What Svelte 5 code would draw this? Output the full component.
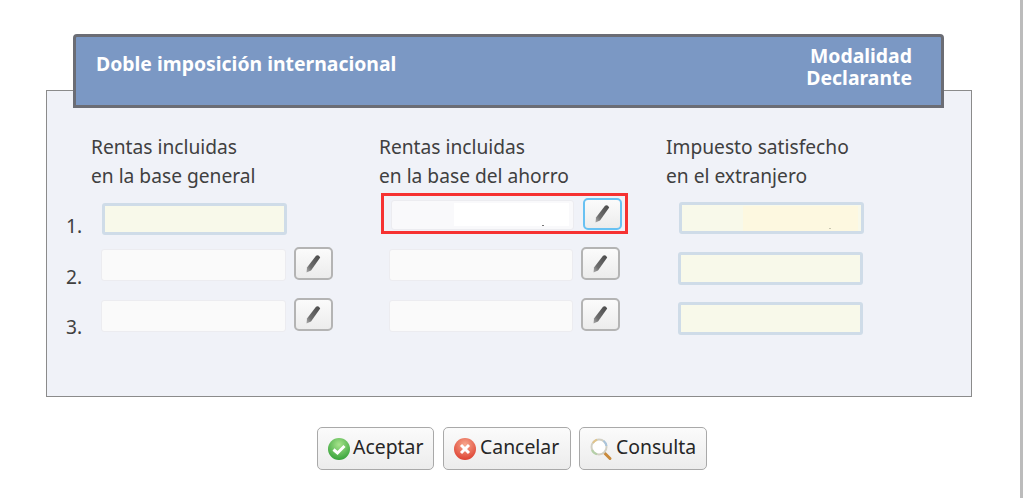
<script>
  const heads = [
    ["Rentas incluidas", "en la base general"],
    ["Rentas incluidas", "en la base del ahorro"],
    ["Impuesto satisfecho", "en el extranjero"]
  ];
  const rows = [2, 3];
</script>

<style>
  :global(body) {
    margin: 0;
    background: #fff;
  }

  .page {
    position: relative;
    box-sizing: border-box;
    width: 1023px;
    height: 498px;
    padding: 34px 0 0 46px;
    border-right: 3px solid #bcbcbc;
    overflow: hidden;
    font-family: "Noto Sans", sans-serif;
    color: #404040;
  }

  .thumb {
    position: absolute;
    top: 25px;
    right: -3px;
    width: 2px;
    height: 55px;
    background: #8f97ad;
  }

  .defs {
    position: absolute;
  }

  .head {
    position: relative;
    z-index: 1;
    box-sizing: border-box;
    display: flex;
    justify-content: space-between;
    width: 871px;
    height: 74px;
    margin: 0 0 -18px 27px;
    padding: 8px 29px 0 20px;
    color: #fff;
    font-weight: 700;
    font-size: 19.4px;
    background: #7b98c4;
    border: 3px solid #6b6d75;
    border-radius: 4px 4px 0 0;
  }

  .head h1 {
    margin: 0;
    padding-top: 6px;
    font: inherit;
    line-height: 25px;
  }

  .mode {
    text-align: right;
    line-height: 22px;
  }

  .panel {
    box-sizing: border-box;
    width: 926px;
    height: 307px;
    padding: 41px 0 0 19px;
    background: #f0f2f8;
    border: 1px solid #8b8b8b;
  }

  .form {
    display: grid;
    grid-template-columns: 25px 288px 287px 300px;
    grid-template-rows: 59px 56px 51px 51px;
    font-size: 19.2px;
  }

  .label {
    line-height: 29px;
  }

  .num {
    line-height: 29px;
  }

  .n1 { margin-top: 20px; }
  .n2 { margin-top: 15px; }
  .n3 { margin-top: 14px; }

  .field {
    box-sizing: border-box;
    width: 185px;
    height: 32px;
    border-radius: 3px;
  }

  .plain {
    margin-top: 2px;
    background: #fafafa;
    border: 1px solid #ececf0;
  }

  .filled {
    background: #f8f9ea;
    border: 3px solid #cfdce8;
  }

  .line {
    display: flex;
    align-items: flex-start;
    gap: 8px;
  }

  .c1 { margin-left: 10px; }
  .c2 { margin-left: 10px; }
  .c2 .field { width: 184px; }
  .c3 { margin: 4px 0 0 12px; height: 33px; }
  .c3.r2 { margin-top: 5px; }

  .first1 { margin: 12px 0 0 11px; }
  .first3 { position: relative; margin: 11px 0 0 13px; }

  .patch {
    position: absolute;
    top: 1px;
    left: 61px;
    width: 115px;
    height: 25px;
    background: #fdf8e0;
  }

  .patch::after {
    content: "";
    position: absolute;
    left: 86px;
    bottom: 2px;
    width: 2px;
    height: 1px;
    background: #c9c6b0;
  }

  .mark {
    box-sizing: border-box;
    display: flex;
    align-items: flex-start;
    gap: 9px;
    width: 247px;
    height: 41px;
    margin: 2px 0 0 2px;
    padding: 2px 0 0 7px;
    border: 3px solid #f63232;
  }

  .mark .field {
    position: relative;
    margin-top: 2px;
    width: 183px;
    height: 30px;
    background: #f9f9fb;
  }

  .mark .patch {
    top: 2px;
    left: 62px;
    height: 23px;
    background: #fff;
  }

  .mark .patch::after {
    left: 88px;
    bottom: 0;
    background: #777;
  }

  .edit {
    box-sizing: border-box;
    display: flex;
    align-items: center;
    justify-content: center;
    flex: none;
    width: 39px;
    height: 33px;
    padding: 0;
    background: linear-gradient(#fbfbfb, #ececec);
    border: 2px solid #b4b4b4;
    border-radius: 5px;
  }

  .mark .edit {
    height: 32px;
    border-color: #68c1f2;
  }

  .actions {
    display: flex;
    gap: 9px;
    margin: 30px 0 0 271px;
  }

  .actions .look {
    margin-left: -1px;
  }

  .actions button {
    box-sizing: border-box;
    display: flex;
    align-items: center;
    height: 43px;
    padding: 0 0 4px 9px;
    font: inherit;
    font-size: 19.4px;
    color: #262626;
    background: linear-gradient(#fbfbfb, #ececec);
    border: 1px solid #a9a9a9;
    border-radius: 5px;
  }

  .actions svg {
    margin-top: 4px;
  }

  .ok { width: 117px; gap: 2px; }
  .ko { width: 128px; gap: 3px; }
  .look { width: 128px; gap: 3px; }
</style>

{#snippet pencil()}
  <svg width="20" height="20" viewBox="0 0 20 20">
    <path d="M12 1.8 Q14.5 0.2 16.2 3.6 L7 16.4 L2.5 18.5 L3 13.6 Z" fill="url(#lead)" />
  </svg>
{/snippet}

<div class="page">
  <svg width="0" height="0" class="defs">
    <defs>
      <linearGradient id="lead" x1="1" y1="0" x2="0" y2="1">
        <stop offset="0" stop-color="#4a4a4a" />
        <stop offset="0.7" stop-color="#6e6e6e" />
        <stop offset="1" stop-color="#acacac" />
      </linearGradient>
    </defs>
  </svg>

  <div class="thumb"></div>

  <header class="head">
    <h1>Doble imposición internacional</h1>
    <div class="mode">Modalidad<br />Declarante</div>
  </header>

  <section class="panel">
    <div class="form">
      <span></span>
      {#each heads as lines}
        <div class="label">{lines[0]}<br />{lines[1]}</div>
      {/each}

      <span class="num n1">1.</span>
      <div class="field filled first1"></div>
      <div class="mark">
        <div class="field plain"><div class="patch"></div></div>
        <button class="edit" aria-label="Editar">{@render pencil()}</button>
      </div>
      <div class="field filled first3"><div class="patch"></div></div>

      {#each rows as n}
        <span class="num n{n}">{n}.</span>
        <div class="line c1">
          <div class="field plain"></div>
          <button class="edit" aria-label="Editar">{@render pencil()}</button>
        </div>
        <div class="line c2">
          <div class="field plain"></div>
          <button class="edit" aria-label="Editar">{@render pencil()}</button>
        </div>
        <div class="field filled c3 r{n}"></div>
      {/each}
    </div>
  </section>

  <div class="actions">
    <button class="ok">
      <svg width="24" height="24" viewBox="0 0 24 24">
        <defs>
          <radialGradient id="green" cx="0.5" cy="0.3" r="0.75">
            <stop offset="0" stop-color="#a8e48c" />
            <stop offset="1" stop-color="#2f9e35" />
          </radialGradient>
        </defs>
        <circle cx="12" cy="12" r="11" fill="url(#green)" />
        <path d="M6.5 12.5 L10.5 16 L17.5 9" fill="none" stroke="#fff" stroke-width="3" />
      </svg>
      Aceptar
    </button>
    <button class="ko">
      <svg width="24" height="24" viewBox="0 0 24 24">
        <defs>
          <radialGradient id="red" cx="0.5" cy="0.3" r="0.75">
            <stop offset="0" stop-color="#f7a88e" />
            <stop offset="1" stop-color="#dc3b2c" />
          </radialGradient>
        </defs>
        <circle cx="12" cy="12" r="11" fill="url(#red)" />
        <path d="M8 8 L16 16 M16 8 L8 16" fill="none" stroke="#fff" stroke-width="3" />
      </svg>
      Cancelar
    </button>
    <button class="look">
      <svg width="24" height="24" viewBox="0 0 24 24">
        <path d="M15 15.5 L21 21.5" stroke="#c98a3c" stroke-width="3" stroke-linecap="round" />
        <circle cx="10" cy="10" r="7.5" fill="#fff" stroke="#d2d0c4" stroke-width="2" />
        <path d="M4 6 A7.5 7.5 0 0 1 8 2.8" fill="none" stroke="#e2c48a" stroke-width="2" />
        <path d="M14.5 3.8 A7.5 7.5 0 0 1 17.4 9" fill="none" stroke="#a9c4dc" stroke-width="2" />
        <path d="M3 13 A7.5 7.5 0 0 0 8 17.2" fill="none" stroke="#b5d0a8" stroke-width="2" />
      </svg>
      Consulta
    </button>
  </div>
</div>
